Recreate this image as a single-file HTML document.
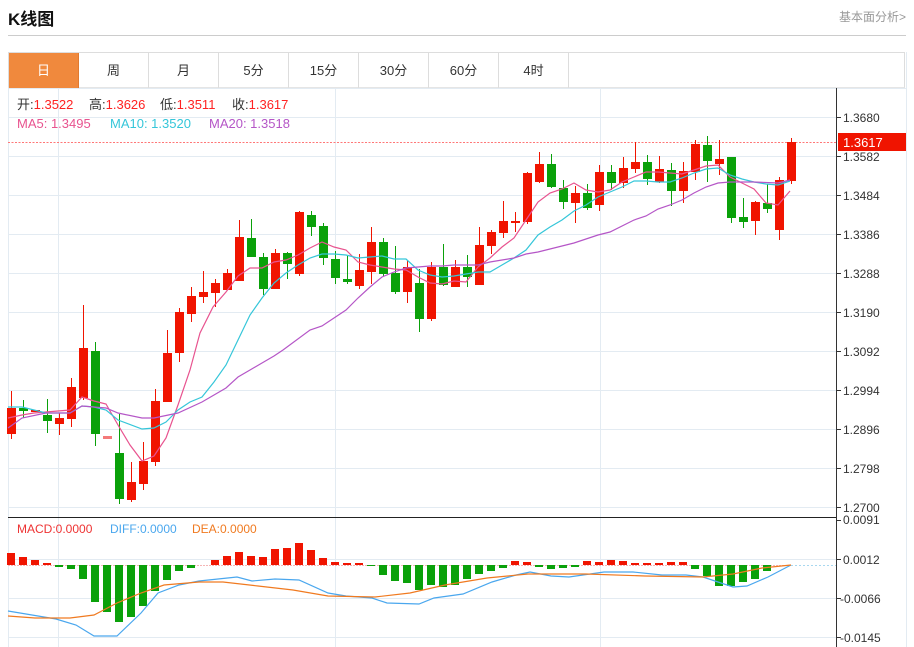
<!DOCTYPE html>
<html><head><meta charset="utf-8"><style>
body{margin:0;background:#fff;width:914px;height:647px;overflow:hidden;font-family:"Liberation Sans","Noto Sans CJK SC",sans-serif;position:relative}
.t{position:absolute;left:8px;top:5px;font-size:17px;font-weight:bold;color:#111}
.r{position:absolute;right:8px;top:8px;font-size:12px;color:#999}
.hr{position:absolute;left:8px;top:35px;width:898px;height:1px;background:#ccc}
.tabs{position:absolute;left:8px;top:52px;width:897px;height:36px;border:1px solid #ddd;border-bottom:1px solid #e5e5e5;box-sizing:border-box}
.tab{position:absolute;top:0;height:35px;width:70px;border-right:1px solid #ddd;box-sizing:border-box;text-align:center;line-height:35px;font-size:13px;color:#333}
</style></head><body>
<div class="t">K线图</div>
<div class="r">基本面分析&gt;</div>
<div class="hr"></div>
<div class="tabs">
<div class="tab" style="left:0;background:#f0893d;color:#fff;border-right:1px solid #e07a30">日</div>
<div class="tab" style="left:70px">周</div>
<div class="tab" style="left:140px">月</div>
<div class="tab" style="left:210px">5分</div>
<div class="tab" style="left:280px">15分</div>
<div class="tab" style="left:350px">30分</div>
<div class="tab" style="left:420px">60分</div>
<div class="tab" style="left:490px">4时</div>
</div>
<svg width="914" height="647" style="position:absolute;left:0;top:0" xmlns="http://www.w3.org/2000/svg" font-family="Liberation Sans, Noto Sans CJK SC, sans-serif">
<g stroke="#e3ebf2" stroke-width="1">
<line x1="8" y1="88.5" x2="906" y2="88.5"/>
<path d="M8 117.5H836M8 156.5H836M8 195.5H836M8 234.5H836M8 273.5H836M8 312.5H836M8 351.5H836M8 390.5H836M8 429.5H836M8 468.5H836M8 507.5H836M8 559.5H836M8 598.5H836M8 637.5H836"/>
<path d="M58.5 88V647M335.5 88V647M600.5 88V647M8.5 88V647M906.5 52V647"/>
</g>
<line x1="836.5" y1="88" x2="836.5" y2="647" stroke="#333"/>
<line x1="8" y1="517.5" x2="836" y2="517.5" stroke="#222"/>
<g stroke="#333"><path d="M836 117.5h5M836 156.5h5M836 195.5h5M836 234.5h5M836 273.5h5M836 312.5h5M836 351.5h5M836 390.5h5M836 429.5h5M836 468.5h5M836 507.5h5M836 520.5h5M836 559.5h5M836 598.5h5M836 637.5h5"/></g>
<g font-size="12" fill="#333">
<text x="843" y="122">1.3680</text><text x="843" y="161">1.3582</text><text x="843" y="200">1.3484</text><text x="843" y="239">1.3386</text><text x="843" y="278">1.3288</text><text x="843" y="317">1.3190</text><text x="843" y="356">1.3092</text><text x="843" y="395">1.2994</text><text x="843" y="434">1.2896</text><text x="843" y="473">1.2798</text><text x="843" y="512">1.2700</text>
<text x="843" y="524">0.0091</text><text x="843" y="564">0.0012</text><text x="840" y="603">-0.0066</text><text x="840" y="642">-0.0145</text>
</g>
<line x1="8" y1="142.5" x2="836" y2="142.5" stroke="#f77" stroke-dasharray="2,1.5"/>
<rect x="838" y="133" width="68" height="18" fill="#f01400"/>
<text x="843" y="147" font-size="13" fill="#fff">1.3617</text>
<g font-size="13">
<text x="17" y="109" fill="#333">开:<tspan fill="#f22">1.3522</tspan></text>
<text x="89" y="109" fill="#333">高:<tspan fill="#f22">1.3626</tspan></text>
<text x="160" y="109" fill="#333">低:<tspan fill="#f22">1.3511</tspan></text>
<text x="232" y="109" fill="#333">收:<tspan fill="#f22">1.3617</tspan></text>
<text x="17" y="128" fill="#e8538f">MA5:  1.3495</text>
<text x="110" y="128" fill="#35c6d9">MA10:  1.3520</text>
<text x="209" y="128" fill="#b556c7">MA20:  1.3518</text>
</g>
<g font-size="12"><text x="17" y="533" fill="#e33">MACD:0.0000</text><text x="110" y="533" fill="#4aa7ee">DIFF:0.0000</text><text x="192" y="533" fill="#f07a20">DEA:0.0000</text></g>
<path stroke="#f01400" stroke-width="1" fill="none" d="M11.5 391V439M59.5 413V435M71.5 378V427M83.5 305V400M131.5 462V502M143.5 442V490M155.5 389V466M167.5 330V402M179.5 308V362M191.5 287V322M203.5 271V303M215.5 279V307M227.5 269V290M239.5 220V281M275.5 249V289M299.5 211V276M359.5 254V289M371.5 227V284M407.5 260V303M431.5 262V321M455.5 260V287M479.5 227V285M491.5 230V254M503.5 201V238M515.5 212V232M527.5 172V224M539.5 152V183M575.5 186V223M599.5 165V211M623.5 157V188M635.5 142V173M659.5 156V183M683.5 162V203M695.5 140V180M719.5 140V175M755.5 201V235M779.5 177V240M791.5 138V184"/>
<path stroke="#0aa10a" stroke-width="1" fill="none" d="M23.5 400V418M47.5 399V433M95.5 342V446M119.5 414V504M251.5 219V257M263.5 253V295M287.5 252V279M311.5 211V236M323.5 223V265M335.5 251V284M347.5 256V284M383.5 238V276M395.5 246V294M419.5 269V332M443.5 244V286M467.5 255V287M551.5 154V188M563.5 180V209M587.5 184V210M611.5 165V190M647.5 155V185M671.5 163V206M707.5 136V182M731.5 157V223M743.5 198V228M767.5 184V213"/>
<g fill="#f01400">
<rect x="7" y="408" width="9" height="26"/><rect x="31" y="410" width="9" height="2"/><rect x="55" y="418" width="9" height="6"/><rect x="67" y="387" width="9" height="32"/><rect x="79" y="348" width="9" height="50"/><rect x="127" y="482" width="9" height="18"/><rect x="139" y="461" width="9" height="23"/><rect x="151" y="401" width="9" height="61"/><rect x="163" y="353" width="9" height="49"/><rect x="175" y="312" width="9" height="41"/><rect x="187" y="296" width="9" height="18"/><rect x="199" y="292" width="9" height="5"/><rect x="211" y="283" width="9" height="10"/><rect x="223" y="273" width="9" height="17"/><rect x="235" y="237" width="9" height="44"/><rect x="271" y="253" width="9" height="36"/><rect x="295" y="212" width="9" height="62"/><rect x="355" y="270" width="9" height="16"/><rect x="367" y="242" width="9" height="30"/><rect x="403" y="267" width="9" height="25"/><rect x="427" y="267" width="9" height="52"/><rect x="451" y="267" width="9" height="20"/><rect x="475" y="245" width="9" height="40"/><rect x="487" y="232" width="9" height="14"/><rect x="499" y="221" width="9" height="12"/><rect x="511" y="221" width="9" height="2"/><rect x="523" y="173" width="9" height="49"/><rect x="535" y="164" width="9" height="18"/><rect x="571" y="193" width="9" height="10"/><rect x="595" y="172" width="9" height="33"/><rect x="619" y="168" width="9" height="15"/><rect x="631" y="162" width="9" height="7"/><rect x="655" y="169" width="9" height="13"/><rect x="679" y="171" width="9" height="20"/><rect x="691" y="144" width="9" height="28"/><rect x="715" y="159" width="9" height="5"/><rect x="751" y="202" width="9" height="19"/><rect x="775" y="180" width="9" height="50"/><rect x="787" y="142" width="9" height="39"/>
</g>
<rect x="103" y="436" width="9" height="3" fill="#f47a7a"/>
<g fill="#0aa10a">
<rect x="19" y="408" width="9" height="3"/><rect x="43" y="415" width="9" height="6"/><rect x="91" y="351" width="9" height="83"/><rect x="115" y="453" width="9" height="46"/><rect x="247" y="238" width="9" height="19"/><rect x="259" y="257" width="9" height="32"/><rect x="283" y="253" width="9" height="11"/><rect x="307" y="215" width="9" height="12"/><rect x="319" y="226" width="9" height="32"/><rect x="331" y="259" width="9" height="19"/><rect x="343" y="279" width="9" height="3"/><rect x="379" y="242" width="9" height="32"/><rect x="391" y="273" width="9" height="19"/><rect x="415" y="283" width="9" height="36"/><rect x="439" y="267" width="9" height="18"/><rect x="463" y="267" width="9" height="10"/><rect x="547" y="164" width="9" height="23"/><rect x="559" y="188" width="9" height="14"/><rect x="583" y="193" width="9" height="15"/><rect x="607" y="172" width="9" height="11"/><rect x="643" y="162" width="9" height="17"/><rect x="667" y="170" width="9" height="21"/><rect x="703" y="145" width="9" height="16"/><rect x="727" y="157" width="9" height="61"/><rect x="739" y="217" width="9" height="5"/><rect x="763" y="203" width="9" height="6"/>
</g>
<g fill="none" stroke-width="1.2">
<polyline stroke="#e8538f" points="8,418 22,415 34,413 46,412 58,411 70,410 82,397 94,401 106,404 118,425 130,445 142,461 154,456 166,438 178,405 190,370 200,333 213,307 226,292 238,276 250,268 262,268 274,262 286,260 298,255 310,248 322,242 334,247 346,250 358,262 370,265 382,267 394,269 406,270 418,277 430,283 442,284 454,281 466,282 478,267 490,258 502,247 514,238 526,220 538,202 550,193 562,189 574,183 586,190 598,192 610,190 622,182 634,177 646,172 658,172 670,173 682,174 694,170 706,166 718,165 730,177 742,183 754,189 766,203 778,205 790,191"/>
<polyline stroke="#35c6d9" points="8,407 22,407 46,413 70,413 82,406 94,407 106,410 118,420 142,429 154,428 166,422 178,410 190,402 202,397 214,382 226,365 238,340 250,315 262,298 274,283 286,273 298,265 310,258 322,254 334,254 346,255 358,258 370,257 382,256 394,259 406,259 418,270 430,275 442,277 454,276 466,274 478,272 490,272 502,265 514,258 526,250 538,235 550,227 562,220 574,211 586,205 598,197 610,192 622,187 634,181 646,181 658,182 670,182 682,178 694,173 706,169 718,168 730,175 742,179 754,182 766,184 778,185 790,181"/>
<polyline stroke="#b556c7" points="8,428 22,418 46,413 70,413 82,406 106,408 118,413 142,418 154,418 178,413 202,402 226,388 238,377 250,370 262,363 274,356 283,350 310,330 322,326 346,310 358,298 370,287 382,277 394,272 406,268 418,267 430,266 442,266 454,265 478,265 490,262 502,260 514,258 526,254 538,252 550,249 574,243 598,235 610,232 634,220 646,216 658,209 670,205 682,200 694,193 706,187 718,183 730,182 754,182 778,183 790,180"/>
</g>
<line x1="8" y1="565.5" x2="791" y2="565.5" stroke="#f5b5b5" stroke-dasharray="2,1"/>
<line x1="791" y1="565.5" x2="836" y2="565.5" stroke="#a8d8f0" stroke-dasharray="2,2"/>
<g fill="#f01400">
<rect x="7" y="553" width="8" height="12"/><rect x="19" y="557" width="8" height="8"/><rect x="31" y="560" width="8" height="5"/><rect x="43" y="563" width="8" height="2"/><rect x="211" y="560" width="8" height="5"/><rect x="223" y="556" width="8" height="9"/><rect x="235" y="552" width="8" height="13"/><rect x="247" y="556" width="8" height="9"/><rect x="259" y="557" width="8" height="8"/><rect x="271" y="549" width="8" height="16"/><rect x="283" y="548" width="8" height="17"/><rect x="295" y="543" width="8" height="22"/><rect x="307" y="550" width="8" height="15"/><rect x="319" y="558" width="8" height="7"/><rect x="331" y="562" width="8" height="3"/><rect x="343" y="563" width="8" height="2"/><rect x="355" y="563" width="8" height="2"/><rect x="511" y="561" width="8" height="4"/><rect x="523" y="562" width="8" height="3"/><rect x="583" y="561" width="8" height="4"/><rect x="595" y="562" width="8" height="3"/><rect x="607" y="560" width="8" height="5"/><rect x="619" y="561" width="8" height="4"/><rect x="631" y="563" width="8" height="2"/><rect x="643" y="563" width="8" height="2"/><rect x="655" y="563" width="8" height="2"/><rect x="667" y="562" width="8" height="3"/><rect x="679" y="562" width="8" height="3"/>
</g>
<g fill="#0aa10a">
<rect x="55" y="565" width="8" height="2"/><rect x="67" y="565" width="8" height="4"/><rect x="79" y="565" width="8" height="14"/><rect x="91" y="565" width="8" height="37"/><rect x="103" y="565" width="8" height="47"/><rect x="115" y="565" width="8" height="57"/><rect x="127" y="565" width="8" height="52"/><rect x="139" y="565" width="8" height="41"/><rect x="151" y="565" width="8" height="26"/><rect x="163" y="565" width="8" height="15"/><rect x="175" y="565" width="8" height="6"/><rect x="187" y="565" width="8" height="3"/><rect x="367" y="565" width="8" height="1"/><rect x="379" y="565" width="8" height="10"/><rect x="391" y="565" width="8" height="16"/><rect x="403" y="565" width="8" height="18"/><rect x="415" y="565" width="8" height="25"/><rect x="427" y="565" width="8" height="20"/><rect x="439" y="565" width="8" height="22"/><rect x="451" y="565" width="8" height="20"/><rect x="463" y="565" width="8" height="14"/><rect x="475" y="565" width="8" height="9"/><rect x="487" y="565" width="8" height="6"/><rect x="499" y="565" width="8" height="3"/><rect x="535" y="565" width="8" height="2"/><rect x="547" y="565" width="8" height="4"/><rect x="559" y="565" width="8" height="3"/><rect x="571" y="565" width="8" height="2"/><rect x="691" y="565" width="8" height="4"/><rect x="703" y="565" width="8" height="11"/><rect x="715" y="565" width="8" height="21"/><rect x="727" y="565" width="8" height="21"/><rect x="739" y="565" width="8" height="17"/><rect x="751" y="565" width="8" height="14"/><rect x="763" y="565" width="8" height="6"/>
</g>
<g fill="none" stroke-width="1.2">
<polyline stroke="#4aa7ee" points="8,611 56,619 76,625 94,636 117,636 141,613 158,593 179,585 199,581 237,577 252,581 275,579 299,580 328,593 346,596 372,598 387,603 419,604 434,598 463,594 492,582 516,575 530,572 551,576 569,577 604,572 633,572 662,575 686,575 703,577 733,587 747,586 768,577 791,565"/>
<polyline stroke="#f07a20" points="8,616 35,618 70,618 94,615 117,603 141,593 164,585 199,582 223,582 258,586 293,590 328,596 375,597 410,593 445,585 487,578 528,574 586,574 645,576 703,577 733,574 762,568 791,565"/>
</g>
</svg>
</body></html>
